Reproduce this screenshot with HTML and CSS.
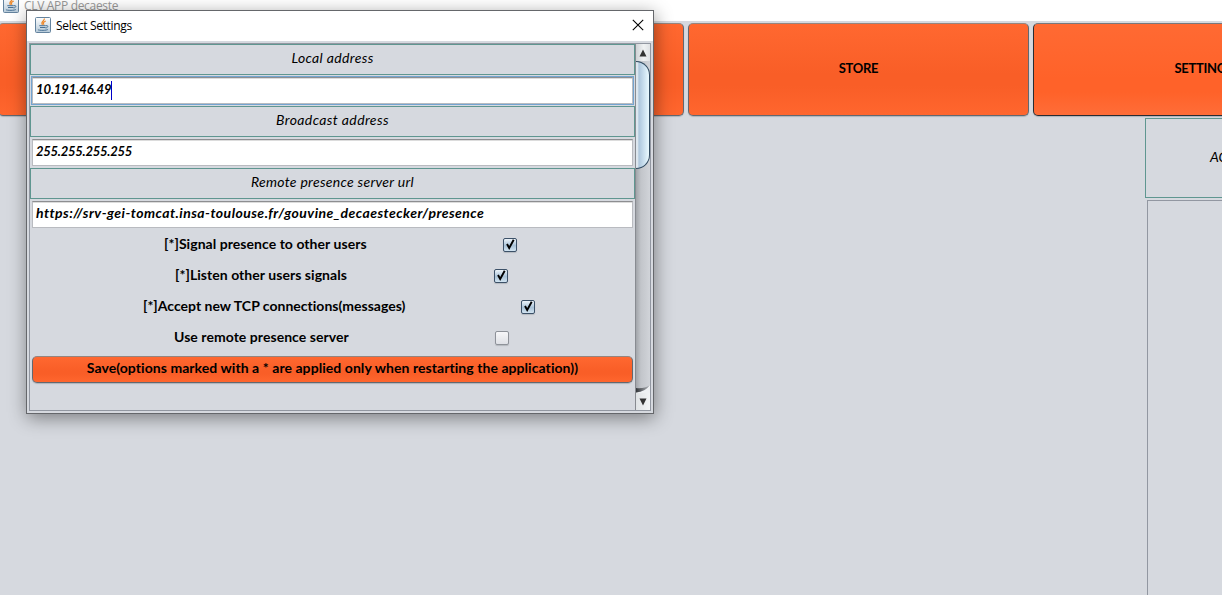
FILE: index.html
```html
<!DOCTYPE html>
<html lang="en">
<head>
<meta charset="utf-8">
<title>CLV APP</title>
<link rel="stylesheet" href="styles.css">
</head>
<body>
<svg width="0" height="0" class="defs">
  <defs>
    <linearGradient id="cup-bg" x1="0" y1="0" x2="0" y2="1"><stop offset="0" stop-color="#fff"/><stop offset="1" stop-color="#b5c9d8"/></linearGradient>
    <symbol id="java" viewBox="0 0 16 16">
      <rect x=".5" y=".5" width="15" height="15" rx="1" fill="url(#cup-bg)" stroke="#64839e"/>
      <path d="M9.300 1.500C10 4 5 4.500 7.500 7.800M10.800 4C8 5 8 6.200 9 7.800" fill="none" stroke="#ed8627" stroke-width="1.200"/>
      <path d="M4.300 8.700h6.500M5 10.500h5.500M3 12.500c-.5 1 9 1.300 10-.2M11 8.700c2.800-.5 2.300 2-.5 2.300" fill="none" stroke="#476f93"/>
    </symbol>
    <symbol id="tick" viewBox="0 0 14 14"><path d="M4 6l2.200 4L10.700 1.800" fill="none" stroke="#000" stroke-width="1.900"/></symbol>
  </defs>
</svg>
<main class="app">
  <header class="app-title"><svg class="java"><use href="#java"/></svg><span>CLV APP decaeste</span></header>
  <nav class="tabs">
    <div class="btn tab"></div>
    <div class="btn tab"></div>
    <div class="btn tab"><span class="t-store">STORE</span></div>
    <div class="btn tab active"><span class="t-settings">SETTINGS</span></div>
  </nav>
  <aside class="side">
    <div class="side-head">ACTIVE USERS</div>
    <div class="side-list"></div>
  </aside>
</main>

<section class="dialog">
  <header class="dialog-title">
    <svg class="java"><use href="#java"/></svg><span>Select Settings</span>
    <svg class="close" viewBox="0 0 12 12"><path d="M.8.8l10.400 10.400M11.200.8L.8 11.200" stroke="#000" stroke-width="1.100"/></svg>
  </header>
  <div class="pane">
    <div class="form">
      <div class="head"><span class="t-local">Local address</span></div>
      <div class="field focus"><div class="input"><span class="t-ip">10.191.46.49</span><i class="caret"></i></div></div>
      <div class="head"><span class="t-broad">Broadcast address</span></div>
      <div class="field"><div class="input"><span class="t-mask">255.255.255.255</span></div></div>
      <div class="head"><span class="t-remote">Remote presence server url</span></div>
      <div class="field"><div class="input"><span class="t-url">https://srv-gei-tomcat.insa-toulouse.fr/gouvine_decaestecker/presence</span></div></div>
      <div class="option signal"><label>[*]Signal presence to other users</label><b class="check on"><svg><use href="#tick"/></svg></b></div>
      <div class="option listen"><label>[*]Listen other users signals</label><b class="check on"><svg><use href="#tick"/></svg></b></div>
      <div class="option accept"><label>[*]Accept new TCP connections(messages)</label><b class="check on"><svg><use href="#tick"/></svg></b></div>
      <div class="option remote"><label>Use remote presence server</label><b class="check"></b></div>
      <div class="btn save"><span class="t-save">Save(options marked with a * are applied only when restarting the application))</span></div>
    </div>
    <div class="scrollbar">
      <div class="arrow"><svg viewBox="0 0 8 8"><path d="M4 .5L7.500 7.500h-7z" fill="#333"/></svg></div>
      <div class="track"><div class="thumb"></div><svg class="curve" viewBox="0 0 14 8"><path d="M14 0Q9 7 0 7.500V8h14z" fill="#eff1f3"/><path d="M14 0Q9 7 0 7.500V3Q8 4 14 0z" fill="url(#shade)"/><defs><linearGradient id="shade"><stop offset="0" stop-color="#33363a"/><stop offset="1" stop-color="#b8bbc0"/></linearGradient></defs></svg></div>
      <div class="arrow down"><svg viewBox="0 0 8 8"><path d="M4 7.500L7.500.5h-7z" fill="#333"/></svg></div>
    </div>
  </div>
</section>
</body>
</html>
```

FILE: styles.css
```css
* { box-sizing: border-box; }
body { margin: 0; width: 1222px; height: 595px; overflow: hidden; position: relative; background: #d6d9df; color: #000; font: bold 14px/18px Lato, "Open Sans", sans-serif; font-variant-ligatures: none; white-space: nowrap; }
.defs { position: absolute; }
.app { height: 595px; overflow: hidden; display: flex; flex-direction: column; }
.java { width: 16px; height: 16px; flex: none; }
.app-title { height: 21px; flex: none; background: #fff; display: flex; padding-left: 3px; gap: 5px; color: #999; font: 12px/14px "Open Sans", sans-serif; }
.app-title .java { margin-top: -3px; }
.app-title span { letter-spacing: -.32px; margin-top: -1px; }
.tabs { display: flex; gap: 4px; flex: none; padding-top: 2px; margin-left: -2px; font-size: 13px; letter-spacing: -.3px; }
.btn { border: 1px solid #626870; border-top-color: #95857f; border-radius: 5px; background: linear-gradient(#ff6830, #f95e27 55%, #f95e27 68%, #ff662e); box-shadow: 0 1px 1px #afb3ba; display: flex; align-items: center; justify-content: center; }
.tab { width: 341px; height: 93px; flex: none; padding-bottom: 3px; }
.tab.active { border-color: #292c32; border-top-color: #77777c; background: linear-gradient(#ff6a33, #ff6229 60%, #ff6229 75%, #ff6d38); }
.side { align-self: flex-end; width: 77px; flex: 1; padding-top: 2px; display: flex; flex-direction: column; gap: 2px; }
.side-head { height: 80px; flex: none; width: 200px; border: 1px solid #5f9690; padding-left: 64px; font-style: italic; font-weight: normal; line-height: 76px; }
.side-list { flex: 1; margin-left: 2px; width: 200px; border: 1px solid #9297a1; border-bottom: 0; }

.dialog { position: absolute; left: 26px; top: 10px; width: 628px; height: 404px; background: #d6d9df; border: 1px solid #65676b; box-shadow: 1px 4px 17px rgba(0,0,0,.42); display: flex; flex-direction: column; }
.dialog-title { height: 30px; flex: none; background: #fff; display: flex; align-items: center; padding: 0 9px 2px 8px; font: 12px/16px "Open Sans", sans-serif; }
.dialog-title span { margin: 2px 0 0 5px; flex: 1; letter-spacing: -.32px; }
.close { width: 12px; height: 12px; }
.pane { flex: 1; margin: 2px 2px 2px; border: 1px solid #9297a1; display: flex; }
.form { width: 605px; flex: none; }
.head { height: 31px; border: 1px solid #5f9690; display: flex; align-items: center; justify-content: center; padding-bottom: 3px; font-weight: normal; font-style: italic; }
.field { height: 31px; padding: 2px; }
.input { height: 27px; background: #fff; border: 1px solid #b9bbc0; border-top-color: #8d8e91; box-shadow: inset 0 1px #dcdcdc; display: flex; align-items: center; padding: 0 0 3px 3px; font-style: italic; }
.focus .input { box-shadow: inset 0 1px #dcdcdc, 0 0 0 1px #73a4d1; }
.caret { width: 1px; height: 19px; background: #0000c8; margin-top: 2px; }
.option { height: 31px; display: flex; align-items: center; }
.option label { flex: none; padding-bottom: 4px; letter-spacing: .05px; }
.check { width: 14px; height: 14px; margin-bottom: 1px; border: 1px solid #8e9299; border-radius: 2px; background: linear-gradient(#f7f7f9, #dfe1e6); box-shadow: 0 1px 1px #b4b8be; }
.check.on { border-color: #3c5168; background: linear-gradient(#edf4fa, #a9c2d8 55%, #d2e4f1); }
.check svg { width: 14px; height: 14px; margin: -1px; display: block; }
.signal { padding-left: 134px; } .signal label { width: 339px; }
.listen { padding-left: 145px; } .listen label { width: 319px; }
.accept { padding-left: 113px; } .accept label { width: 378px; letter-spacing: .01px; }
.remote { padding-left: 144px; } .remote label { width: 321px; }
.save { height: 27px; margin: 2px 2px; padding-bottom: 3px; border-radius: 5px; }
.t-save { letter-spacing: .06px; }
.t-local { letter-spacing: .35px; }
.t-broad { letter-spacing: .38px; }
.t-remote { letter-spacing: .29px; }
.t-url { letter-spacing: .45px; }
.t-ip { font-size: 13px; letter-spacing: -.1px; }
.t-mask { font-size: 13px; letter-spacing: -.25px; }
.scrollbar { flex: 1; display: flex; flex-direction: column; border-left: 1px solid #888b91; }
.arrow { height: 17px; flex: none; background: linear-gradient(90deg, #d0d3d6, #f0f2f3 55%, #dfe2e5); display: flex; align-items: center; justify-content: center; }
.arrow svg { width: 8px; height: 8px; }
.track { flex: 1; display: flex; flex-direction: column; justify-content: space-between; background: linear-gradient(90deg, #a2a5aa, #c2c5ca 35%, #d1d4d9); }
.thumb { height: 108px; border: 1px solid #304a60; border-left: 0; border-radius: 0 14px 14px 0; background: linear-gradient(90deg, #dce6ee 0 14%, #adc6dc 22%, #c6dcec 55%, #eafaff); }
.curve { width: 100%; height: 8px; }
.arrow.down { background: linear-gradient(90deg, #e0e3e5, #f3f5f6); }
```
